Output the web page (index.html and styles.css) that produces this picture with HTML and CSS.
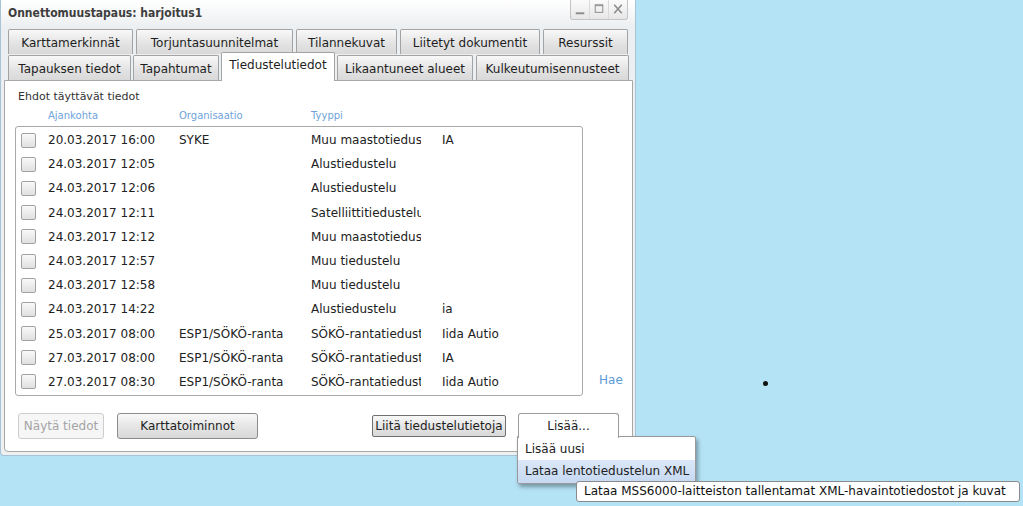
FILE: index.html
```html
<!DOCTYPE html>
<html lang="fi">
<head>
<meta charset="utf-8">
<title>Onnettomuustapaus</title>
<link rel="stylesheet" href="styles.css">
</head>
<body>
<div class="window">
  <div class="titlebar">
    <span class="title">Onnettomuustapaus: harjoitus1</span>
    <div class="controls">
      <span class="ctl"><svg width="19" height="19" viewBox="0 0 19 19"><path d="M5 13.5h9" stroke="#8a8a8a" stroke-width="2"/></svg></span>
      <span class="ctl"><svg width="19" height="19" viewBox="0 0 19 19"><rect x="5.5" y="4.5" width="8" height="8" fill="none" stroke="#8a8a8a" stroke-width="1"/><path d="M5.5 5.5h8" stroke="#8a8a8a" stroke-width="1"/></svg></span>
      <span class="ctl"><svg width="19" height="19" viewBox="0 0 19 19"><path d="M5.5 4.5l8 9M13.5 4.5l-8 9" stroke="#8a8a8a" stroke-width="1.6"/></svg></span>
    </div>
  </div>
  <div class="tabs">
    <div class="tabrow back">
      <div class="tab t-kartta">Karttamerkinnät</div>
      <div class="tab t-torj">Torjuntasuunnitelmat</div>
      <div class="tab t-tilanne">Tilannekuvat</div>
      <div class="tab t-liitetyt">Liitetyt dokumentit</div>
      <div class="tab t-resurssit">Resurssit</div>
    </div>
    <div class="tabrow front">
      <div class="tab t-tapauksen">Tapauksen tiedot</div>
      <div class="tab t-tapahtumat">Tapahtumat</div>
      <div class="tab active t-tiedustelu">Tiedustelutiedot</div>
      <div class="tab t-likaantuneet">Likaantuneet alueet</div>
      <div class="tab t-kulkeutuminen">Kulkeutumisennusteet</div>
    </div>
  </div>
  <div class="panel">
    <div class="caption">Ehdot täyttävät tiedot</div>
    <div class="colheads">
      <span></span><span>Ajankohta</span><span>Organisaatio</span><span>Tyyppi</span><span></span>
    </div>
    <div class="listarea">
      <div class="list">
        <div class="row"><span class="cb"></span><span>20.03.2017 16:00</span><span>SYKE</span><span class="type">Muu maastotiedustelu</span><span>IA</span></div>
        <div class="row"><span class="cb"></span><span>24.03.2017 12:05</span><span></span><span class="type">Alustiedustelu</span><span></span></div>
        <div class="row"><span class="cb"></span><span>24.03.2017 12:06</span><span></span><span class="type">Alustiedustelu</span><span></span></div>
        <div class="row"><span class="cb"></span><span>24.03.2017 12:11</span><span></span><span class="type">Satelliittitiedustelu</span><span></span></div>
        <div class="row"><span class="cb"></span><span>24.03.2017 12:12</span><span></span><span class="type">Muu maastotiedustelu</span><span></span></div>
        <div class="row"><span class="cb"></span><span>24.03.2017 12:57</span><span></span><span class="type">Muu tiedustelu</span><span></span></div>
        <div class="row"><span class="cb"></span><span>24.03.2017 12:58</span><span></span><span class="type">Muu tiedustelu</span><span></span></div>
        <div class="row"><span class="cb"></span><span>24.03.2017 14:22</span><span></span><span class="type">Alustiedustelu</span><span>ia</span></div>
        <div class="row"><span class="cb"></span><span>25.03.2017 08:00</span><span>ESP1/SÖKÖ-ranta</span><span class="type">SÖKÖ-rantatiedustelu</span><span>Iida Autio</span></div>
        <div class="row"><span class="cb"></span><span>27.03.2017 08:00</span><span>ESP1/SÖKÖ-ranta</span><span class="type">SÖKÖ-rantatiedustelu</span><span>IA</span></div>
        <div class="row"><span class="cb"></span><span>27.03.2017 08:30</span><span>ESP1/SÖKÖ-ranta</span><span class="type">SÖKÖ-rantatiedustelu</span><span>Iida Autio</span></div>
      </div>
      <a class="hae">Hae</a>
    </div>
    <div class="buttons">
      <button class="btn disabled">Näytä tiedot</button>
      <button class="btn map">Karttatoiminnot</button>
      <button class="btn attach">Liitä tiedustelutietoja</button>
      <button class="btn more">Lisää...</button>
    </div>
  </div>
</div>
<div class="menu">
  <div class="item">Lisää uusi</div>
  <div class="item hl">Lataa lentotiedustelun XML</div>
</div>
<div class="tooltip">Lataa MSS6000-laitteiston tallentamat XML-havaintotiedostot ja kuvat</div>
<div class="dot"></div>
</body>
</html>
```

FILE: styles.css
```css
html, body {
  margin: 0;
  padding: 0;
}
body {
  width: 1023px;
  height: 506px;
  overflow: hidden;
  background: #b4e3f6;
  font-family: "DejaVu Sans", Verdana, sans-serif;
  font-size: 12px;
  color: #222;
  position: relative;
}
.window {
  width: 636px;
  height: 456px;
  box-sizing: border-box;
  border: 1px solid #a8c4d4;
  border-top: none;
  border-radius: 0 0 4px 4px;
  padding: 0 3px 3px 2px;
  background: linear-gradient(#ffffff 0, #eceff1 27px, #eef0f2 100%);
  display: flex;
  flex-direction: column;
}
.titlebar {
  height: 27px;
  display: flex;
  align-items: flex-start;
  justify-content: space-between;
}
.title {
  font-family: "DejaVu Sans Condensed", "DejaVu Sans", sans-serif;
  font-weight: bold;
  font-size: 12px;
  color: #3e3e3e;
  padding: 6px 0 0 5px;
  line-height: 14px;
}
.controls {
  display: flex;
  margin-right: 4px;
  border: 1px solid #c4c4c4;
  border-top: none;
  border-radius: 0 0 3px 3px;
  background: linear-gradient(#fbfbfb, #e7e7e7);
  height: 19px;
}
.ctl {
  width: 18px;
  height: 19px;
  display: flex;
  justify-content: center;
  border-left: 1px solid #dadada;
}
.ctl:first-child {
  border-left: none;
}
.tabs {
  margin-top: 2px;
  display: flex;
  flex-direction: column;
  gap: 1px;
  padding-left: 5px;
}
.tabrow {
  display: flex;
  height: 25px;
  align-items: flex-end;
}
.back {
  gap: 3px;
}
.front {
  gap: 2px;
}
.tab {
  box-sizing: border-box;
  height: 25px;
  border: 1px solid #a3a3a3;
  border-bottom: none;
  border-radius: 2px 2px 0 0;
  background: linear-gradient(#f8f8f8, #e2e2e2 60%, #d9d9d9);
  display: flex;
  align-items: center;
  justify-content: center;
  white-space: nowrap;
  color: #1e1e1e;
  padding-top: 1px;
}
.tab.active {
  height: 29px;
  margin-bottom: -1px;
  background: #fff;
  position: relative;
  z-index: 2;
  align-items: flex-start;
  padding-top: 5px;
}
.t-kartta { width: 125px; }
.t-torj { width: 157px; }
.t-tilanne { width: 101px; }
.t-liitetyt { width: 140px; }
.t-resurssit { width: 85px; }
.t-tapauksen { width: 123px; }
.t-tapahtumat { width: 86px; }
.t-tiedustelu { width: 114px; }
.t-likaantuneet { width: 136px; }
.t-kulkeutuminen { width: 153px; margin-left: 1px; }
.panel {
  box-sizing: border-box;
  margin-left: 1px;
  width: 629px;
  height: 372px;
  background: #fff;
  border: 1px solid #a8a8a8;
  border-radius: 0 0 4px 4px;
  padding: 9px 0 0 10px;
  display: flex;
  flex-direction: column;
}
.caption {
  font-size: 11px;
  line-height: 14px;
  color: #333;
  margin-left: 3px;
}
.colheads {
  margin-top: 6px;
  margin-left: 1px;
  display: grid;
  grid-template-columns: 32px 131px 132px 131px 1fr;
  width: 568px;
  font-size: 10px;
  line-height: 12px;
  color: #6fa3da;
}
.listarea {
  margin-top: 4px;
  display: flex;
  align-items: flex-end;
}
.list {
  box-sizing: border-box;
  width: 568px;
  height: 270px;
  border: 1px solid #a9a9a9;
  border-radius: 3px;
  padding-top: 1px;
}
.row {
  height: 24.2px;
  display: grid;
  grid-template-columns: 32px 131px 132px 131px 1fr;
  align-items: center;
  white-space: nowrap;
  line-height: 16px;
}
.row .type {
  display: block;
  width: 110px;
  overflow: hidden;
}
.cb {
  box-sizing: border-box;
  width: 15px;
  height: 15px;
  margin-left: 5px;
  border: 1px solid #a2a2a2;
  border-radius: 2px;
  background: linear-gradient(#f9f9f9, #e0e0e0);
}
.hae {
  margin: 0 0 9px 16px;
  line-height: 14px;
  color: #5d9bd6;
  font-size: 12px;
}
.buttons {
  margin-top: 17px;
  height: 26px;
  display: flex;
  align-items: center;
  padding-left: 3px;
}
.btn {
  box-sizing: border-box;
  font-family: "DejaVu Sans", Verdana, sans-serif;
  font-size: 12px;
  color: #1e1e1e;
  padding: 0;
  border: 1px solid #8c8c8c;
  border-radius: 3px;
  background: linear-gradient(#f8f8f8, #e4e4e4 55%, #d8d8d8);
  height: 26px;
}
.btn.disabled {
  width: 86px;
  color: #a4a4a4;
  border-color: #cdcdcd;
  background: #f6f6f6;
}
.btn.map {
  width: 141px;
  margin-left: 13px;
}
.btn.attach {
  width: 134px;
  height: 22px;
  margin-left: 114px;
  border-color: #707070;
  border-radius: 2px;
}
.btn.more {
  width: 101px;
  height: 25px;
  margin-left: 12px;
  align-self: flex-start;
  background: #fff;
  border-color: #9c9c9c;
  border-bottom: none;
  border-radius: 3px 3px 0 0;
  position: relative;
  z-index: 6;
  padding-bottom: 1px;
}
.menu {
  position: absolute;
  left: 517px;
  top: 436px;
  width: 179px;
  height: 48px;
  box-sizing: border-box;
  background: #fff;
  border: 1px solid #9a9a9a;
  border-radius: 0 2px 2px 2px;
  box-shadow: 2px 3px 4px rgba(0, 0, 0, 0.35);
  z-index: 5;
  padding-top: 1px;
}
.item {
  height: 22px;
  line-height: 22px;
  padding-left: 7px;
  color: #222;
}
.item.hl {
  height: 23px;
  line-height: 23px;
  background: linear-gradient(#dbe7f8, #c6d9f2);
}
.tooltip {
  position: absolute;
  left: 576px;
  top: 481px;
  width: 444px;
  height: 21px;
  box-sizing: border-box;
  background: #fff;
  border: 1px solid #8a8a8a;
  border-radius: 3px;
  padding-left: 7px;
  line-height: 19px;
  white-space: nowrap;
  color: #111;
  z-index: 7;
}
.dot {
  position: absolute;
  left: 763px;
  top: 381px;
  width: 5px;
  height: 5px;
  border-radius: 50%;
  background: #111;
}
```
